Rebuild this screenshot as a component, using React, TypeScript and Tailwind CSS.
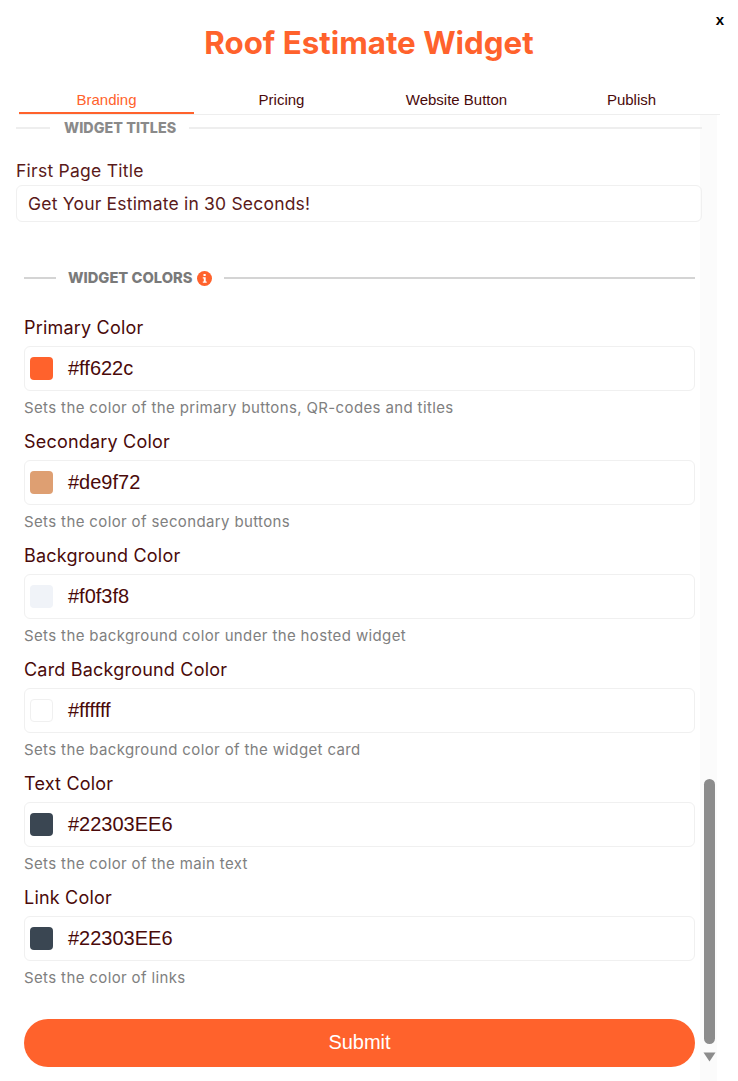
import React from "react";

const fields = [
  { label: "Primary Color", value: "#ff622c", swatch: "bg-[#ff622c]", hint: "Sets the color of the primary buttons, QR-codes and titles" },
  { label: "Secondary Color", value: "#de9f72", swatch: "bg-[#de9f72]", hint: "Sets the color of secondary buttons" },
  { label: "Background Color", value: "#f0f3f8", swatch: "bg-[#f0f3f8]", hint: "Sets the background color under the hosted widget" },
  { label: "Card Background Color", value: "#ffffff", swatch: "bg-white border border-[#f0f0f0]", hint: "Sets the background color of the widget card" },
  { label: "Text Color", value: "#22303EE6", swatch: "bg-[#3a4652]", hint: "Sets the color of the main text" },
  { label: "Link Color", value: "#22303EE6", swatch: "bg-[#3a4652]", hint: "Sets the color of links" },
];

const tabs = ["Branding", "Pricing", "Website Button", "Publish"];
const poppins = "font-['Inter','Open_Sans',sans-serif]";

function Field({ label, value, swatch, hint }: (typeof fields)[number]) {
  return (
    <div className="h-[114px]">
      <div className="h-[33px] pt-[1px] text-[18px] leading-[28px] tracking-[0.2px] text-[#4a0a0a]">{label}</div>
      <div className="flex h-[45px] items-center gap-[15px] rounded-[6px] border border-[#f0f0f0] pb-[1px] pl-[5px]">
        <div className={`h-[23px] w-[23px] rounded-[4px] ${swatch}`} />
        <span className="font-['Liberation_Sans',sans-serif] text-[20px] text-[#4a0a0a]">{value}</span>
      </div>
      <div className="mt-[7px] text-[15px] leading-[20px] tracking-[0.37px] text-[#808080]">{hint}</div>
    </div>
  );
}

export default function App() {
  return (
    <div className={`relative h-[1081px] w-[738px] overflow-hidden bg-white ${poppins}`}>
      <div className="absolute right-[14px] top-[12px] font-['Liberation_Sans',sans-serif] text-[15px] font-bold leading-[16px] text-black">x</div>

      <h1 className="pt-[21px] text-center text-[31.3px] font-bold leading-[44px] text-[#ff622c]">Roof Estimate Widget</h1>

      <div className="ml-[19px] mt-[26px] flex w-[701px] border-b border-[#eeeeee] font-['Liberation_Sans',sans-serif] text-[15px]">
        {tabs.map((t, i) => (
          <div
            key={t}
            className={`h-[23px] w-[175px] text-center leading-[18px] ${
              i === 0 ? "border-b-2 border-[#ff622c] text-[#ff622c]" : "text-[#4a0a0a]"
            }`}
          >
            {t}
          </div>
        ))}
      </div>

      <div className="flex">
        <div className="relative z-10 w-[700px] shrink-0">
          <div className="ml-[16px] w-[686px]">
            <div className="flex h-[26px] items-center">
              <div className="h-[2px] w-[34px] bg-[#eeeeee]" />
              <span className="ml-[14px] text-[14.3px] font-extrabold tracking-[0.05px] text-[#8a8a8a]">WIDGET TITLES</span>
              <div className="ml-[13px] h-[2px] flex-1 bg-[#eeeeee]" />
            </div>
            <div className="mt-[18px] text-[17.5px] leading-[24px] tracking-[0.25px] text-[#5a1a1a]">First Page Title</div>
            <div className="mt-[2px] flex h-[37px] items-center rounded-[6px] border border-[#f0f0f0] pl-[11px] pt-[1px] text-[17.5px] tracking-[0.2px] text-[#5a1a1a]">
              Get Your Estimate in 30 Seconds!
            </div>
          </div>

          <div className="ml-[24px] mt-[42px] w-[671px]">
            <div className="flex h-[28px] items-center">
              <div className="h-[2px] w-[32px] bg-[#d4d4d4]" />
              <span className="ml-[12px] text-[14.7px] font-extrabold text-[#7a7a7a]">WIDGET COLORS</span>
              <svg className="ml-[5px]" width="15" height="15" viewBox="0 0 15 15">
                <circle cx="7.5" cy="7.5" r="7.5" fill="#ff622c" />
                <rect x="6.5" y="3" width="2.2" height="2" fill="#fff" />
                <path d="M5.8 6.2h2.9v4.4h1v1.2H5.8v-1.2h1V7.4h-1z" fill="#fff" />
              </svg>
              <div className="ml-[12px] h-[2px] flex-1 bg-[#d4d4d4]" />
            </div>
            <div className="mt-[21px]">
              {fields.map((f) => (
                <Field key={f.label} {...f} />
              ))}
            </div>
            <button className="mt-[22px] h-[48px] w-full rounded-[24px] bg-[#ff622c] pb-[2px] font-['Liberation_Sans',sans-serif] text-[20px] text-white">
              Submit
            </button>
          </div>
        </div>

        <div className="flex h-[966px] w-[17px] flex-col items-center justify-end bg-[#fbfbfb] pb-[19px] pl-[2px]">
          <div className="h-[265px] w-[11px] rounded-[6px] bg-[#8c8c8c]" />
          <svg className="mt-[8px]" width="13" height="10" viewBox="0 0 13 10">
            <path d="M0.5 0.5h12L6.5 9.5z" fill="#8c8c8c" />
          </svg>
        </div>
      </div>
    </div>
  );
}
